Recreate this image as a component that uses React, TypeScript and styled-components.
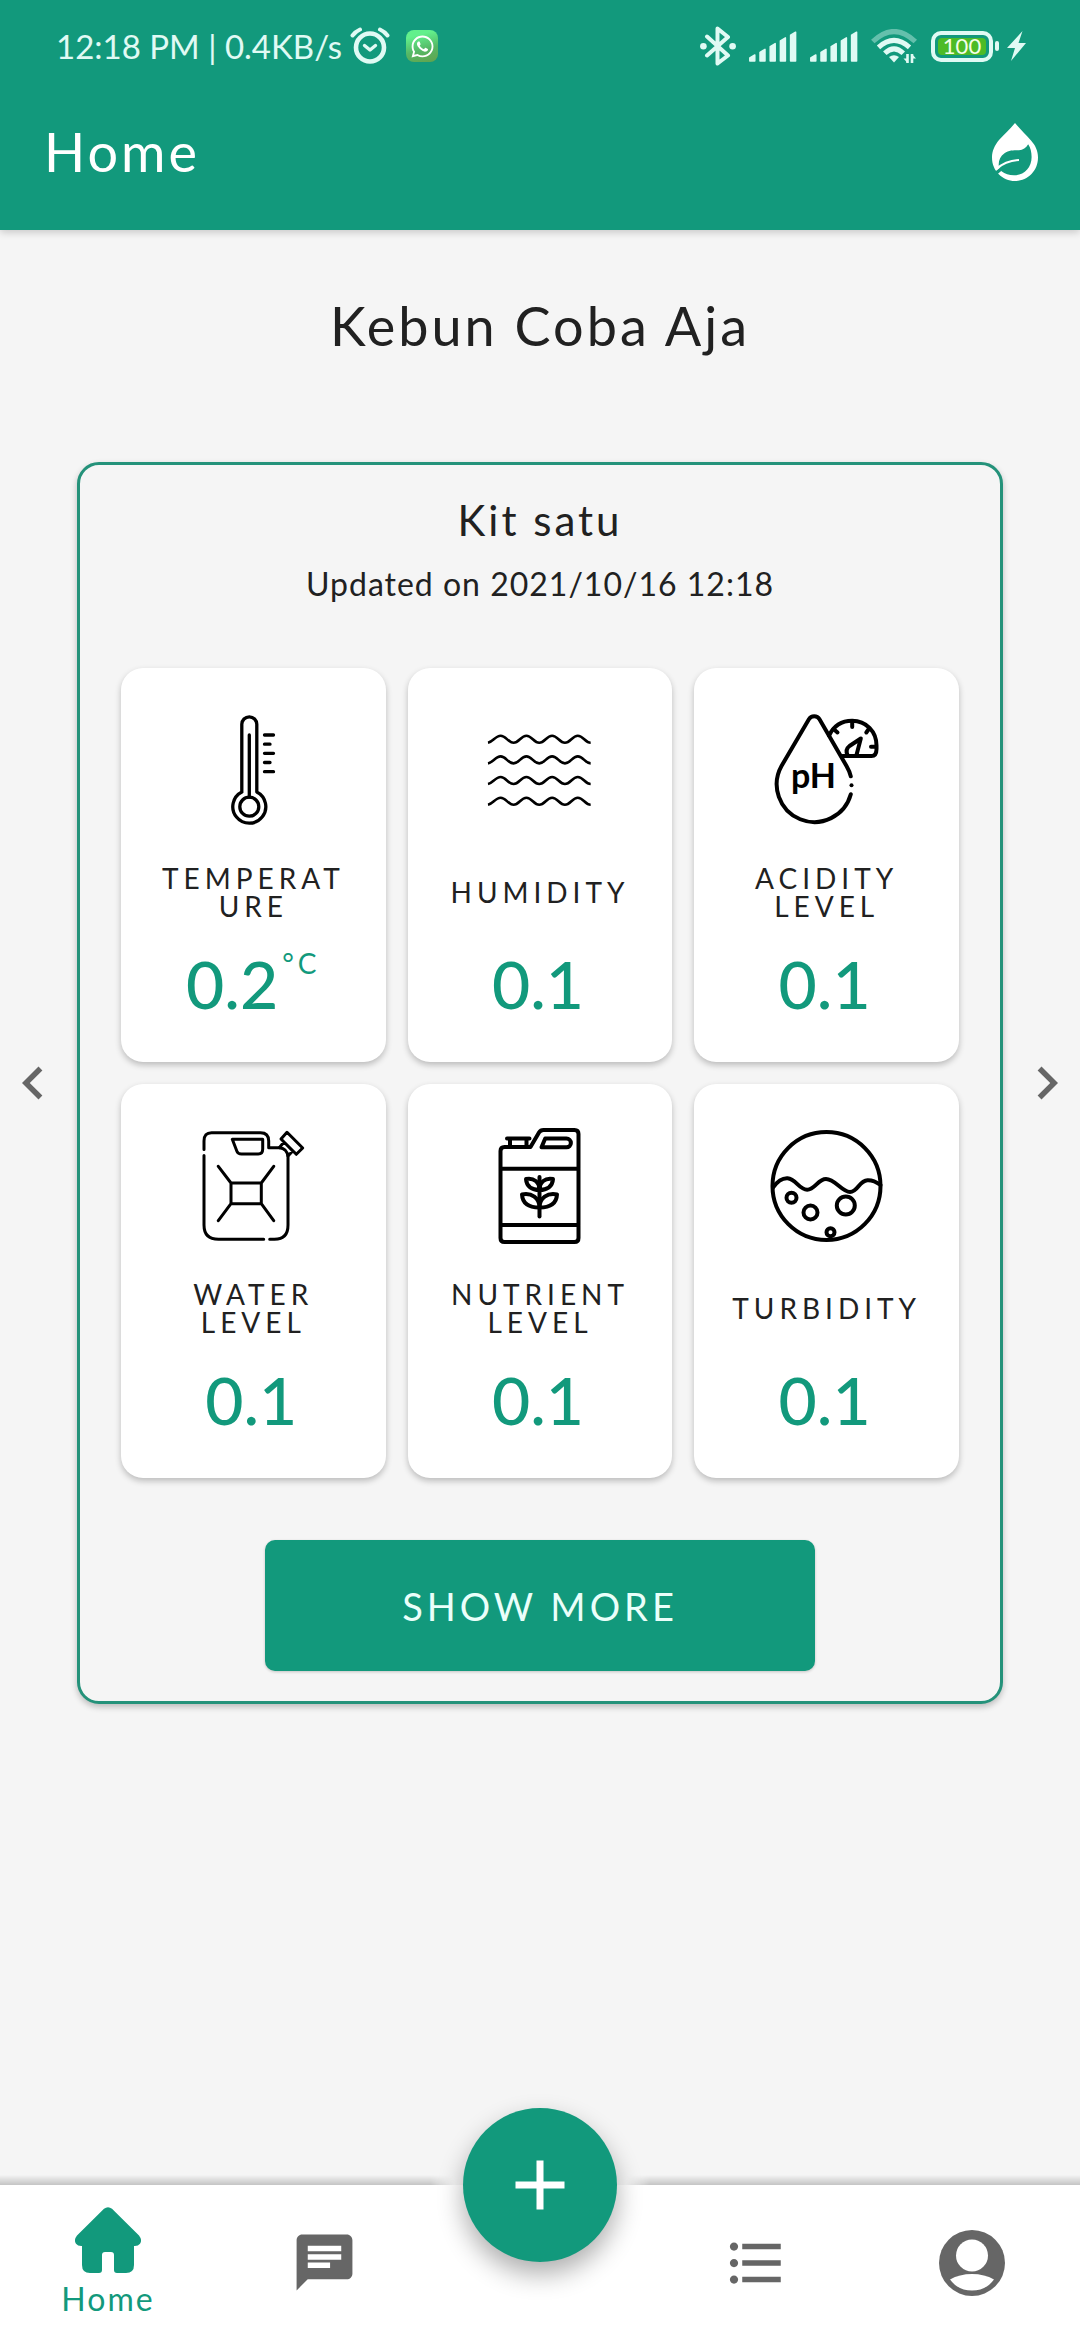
import React from "react";
import styled, { createGlobalStyle } from "styled-components";
import {
  MdAdd,
  MdChat,
  MdChevronLeft,
  MdChevronRight,
  MdFormatListBulleted,
} from "react-icons/md";
import { FaWhatsapp } from "react-icons/fa";

const green = "#12997c";
const ink = "#212121";
const grey = "#666666";
const surface = "#f5f5f5";
const statusInk = "#e0faf4";

const GlobalStyle = createGlobalStyle`
  *, *::before, *::after { box-sizing: border-box; }
  body {
    margin: 0;
    background: ${surface};
    color: ${ink};
    font-family: Lato, "Open Sans", sans-serif;
  }
  h1, h2, h3, p { margin: 0; font-weight: 400; }
  button { font: inherit; border: 0; padding: 0; background: none; cursor: pointer; }
  svg { display: block; flex: none; }
`;

const Screen = styled.div`
  min-height: 100vh;
  display: flex;
  flex-direction: column;
`;

/* ---------- header ---------- */

const Header = styled.header`
  background: ${green};
  padding-bottom: 18px;
  box-shadow: 0 2px 8px rgba(0, 0, 0, 0.2);
`;

const StatusBar = styled.div`
  height: 92px;
  padding: 0 54px 0 56px;
  display: flex;
  align-items: center;
  justify-content: space-between;
  color: ${statusInk};
  font-size: 33px;
  line-height: 40px;
`;

const StatusGroup = styled.div<{ $gap: number }>`
  display: flex;
  align-items: center;
  gap: ${(p) => p.$gap}px;
`;

const StatusText = styled.span`
  white-space: nowrap;
`;

const WhatsAppBadge = styled.span`
  width: 32px;
  height: 32px;
  margin-left: 8px;
  border-radius: 8px;
  display: grid;
  place-items: center;
  font-size: 25px;
  color: #ffffff;
  background: linear-gradient(165deg, #62f08c 20%, #55b866 60%, #62a24c);
`;

const BatteryStatus = styled.span`
  display: flex;
  align-items: center;
  gap: 8px;
`;

const Battery = styled.span`
  display: flex;
  align-items: center;
  gap: 2px;
`;

const BatteryBody = styled.span`
  width: 62px;
  height: 31px;
  padding: 3px;
  border: 4px solid ${statusInk};
  border-radius: 10px;
  display: flex;
`;

const BatteryFill = styled.span`
  flex: 1;
  border-radius: 4px;
  background: #4dbb26;
  color: #f4ffe9;
  font-size: 22px;
  line-height: 16px;
  text-align: center;
`;

const BatteryTip = styled.span`
  width: 4px;
  height: 10px;
  border-radius: 2px;
  background: ${statusInk};
`;

const AppBar = styled.div`
  height: 120px;
  padding: 0 42px 0 44px;
  display: flex;
  align-items: center;
  justify-content: space-between;
  color: #ffffff;
`;

const PageTitle = styled.h1`
  font-size: 54px;
  line-height: 64px;
  letter-spacing: 3px;
`;

/* ---------- kit panel ---------- */

const Main = styled.main`
  flex: 1;
  padding: 64px 0;
`;

const GardenName = styled.h2`
  font-size: 54px;
  line-height: 64px;
  letter-spacing: 3px;
  text-align: center;
`;

const Carousel = styled.div`
  margin-top: 104px;
  display: flex;
  align-items: center;
  gap: 11px;
`;

const CarouselButton = styled.button`
  flex: none;
  font-size: 66px;
  color: ${grey};
`;

const KitPanel = styled.section`
  flex: 1;
  min-width: 0;
  padding: 29px 41px 30px;
  border: 3px solid #24927a;
  border-radius: 22px;
  background: ${surface};
  box-shadow: 0 3px 6px rgba(0, 0, 0, 0.24);
  display: flex;
  flex-direction: column;
  align-items: center;
`;

const KitName = styled.h3`
  font-size: 42px;
  line-height: 52px;
  letter-spacing: 3px;
`;

const Updated = styled.p`
  margin-top: 18px;
  font-size: 32px;
  line-height: 40px;
  letter-spacing: 1px;
`;

const SensorGrid = styled.div`
  align-self: stretch;
  margin-top: 64px;
  display: grid;
  grid-template-columns: repeat(3, minmax(0, 1fr));
  gap: 22px;
`;

const SensorCard = styled.article`
  padding: 42px 33px 38px;
  border-radius: 22px;
  background: #ffffff;
  box-shadow: 0 3px 6px rgba(0, 0, 0, 0.24);
  display: flex;
  flex-direction: column;
  align-items: center;
`;

const SensorLabel = styled.h3`
  height: 56px;
  width: 100%;
  margin-top: 34px;
  display: flex;
  align-items: center;
  justify-content: center;
  font-size: 28px;
  line-height: 28px;
  letter-spacing: 5px;
  text-align: center;
  text-transform: uppercase;
  overflow-wrap: anywhere;
`;

const Reading = styled.p`
  margin-top: 24px;
  display: flex;
  gap: 4px;
  color: ${green};
  font-size: 66px;
  font-weight: 500;
  line-height: 80px;
`;

const Unit = styled.span`
  padding-top: 5px;
  font-size: 28px;
  font-weight: 400;
  line-height: 28px;
  letter-spacing: 4px;
`;

const ShowMore = styled.button`
  && {
    width: 550px;
    max-width: 100%;
    height: 131px;
    margin-top: 62px;
    border-radius: 10px;
    background: ${green};
    box-shadow: 0 1px 3px rgba(0, 0, 0, 0.2);
    color: #eafffa;
    font-size: 38px;
    line-height: 48px;
    letter-spacing: 4px;
  }
`;

/* ---------- bottom navigation ---------- */

const BottomNav = styled.nav`
  position: relative;
  height: 155px;
  background: #ffffff;
  display: grid;
  grid-template-columns: repeat(5, minmax(0, 1fr));

  &::before {
    content: "";
    position: absolute;
    left: 0;
    right: 0;
    bottom: 100%;
    height: 10px;
    background: linear-gradient(to top, rgba(0, 0, 0, 0.2), rgba(0, 0, 0, 0));
    mask-image: linear-gradient(
      to right,
      #000 calc(50% - 110px),
      transparent calc(50% - 86px),
      transparent calc(50% + 86px),
      #000 calc(50% + 110px)
    );
  }
`;

const NavItem = styled.a<{ $active?: boolean }>`
  display: flex;
  flex-direction: column;
  align-items: center;
  justify-content: center;
  gap: 6px;
  color: ${(p) => (p.$active ? green : grey)};
  text-decoration: none;
  font-size: 32px;
  line-height: 40px;
  letter-spacing: 2px;
`;

const AddButton = styled.button`
  && {
    position: absolute;
    top: -77px;
    left: calc(50% - 77px);
    width: 154px;
    height: 154px;
    border-radius: 50%;
    display: grid;
    place-items: center;
    background: ${green};
    color: #ffffff;
    font-size: 84px;
    box-shadow: 0 12px 26px rgba(0, 0, 0, 0.32);
  }
`;

/* ---------- status icons ---------- */

const AlarmIcon = () => (
  <svg width="40" height="38" viewBox="0 0 40 38" fill="none" stroke="currentColor" strokeLinecap="round" strokeLinejoin="round">
    <circle cx="20" cy="20.5" r="14" strokeWidth="4.6" />
    <path d="M14.5 18.5L20 23l5.500-4.500" strokeWidth="3.400" />
    <path d="M2.500 8.500Q5.500 4.500 10 2.500M30 2.500q4.500 2 7.500 6" strokeWidth="4" />
  </svg>
);

const BluetoothIcon = () => (
  <svg width="36" height="40" viewBox="0 0 36 40" fill="none">
    <path d="M7 10.500L28 29.500L17.500 37.500V2.500L28 11L7 29.500" stroke="currentColor" strokeWidth="4" strokeLinecap="round" strokeLinejoin="round" />
    <circle cx="3.400" cy="20.200" r="3.300" fill="currentColor" />
    <circle cx="32.600" cy="20.200" r="3.300" fill="currentColor" />
  </svg>
);

const SignalIcon = () => (
  <svg width="48" height="31" viewBox="0 0 48 31" fill="currentColor" stroke="currentColor" strokeWidth="1.500" strokeLinejoin="round">
    {[0, 1, 2, 3, 4].map((i) => {
      const x = 0.8 + i * 10.2;
      const top = 24 - i * 5.7;
      return <path key={i} d={`M${x} ${top + 3}L${x + 5} ${top}V30H${x}Z`} />;
    })}
  </svg>
);

const WifiIcon = () => (
  <svg width="47" height="35" viewBox="0 0 47 35" fill="none" stroke="currentColor" strokeWidth="5">
    <path d="M1.800 12.500Q23 -7.500 44.300 12.500" opacity="0.400" />
    <path d="M7.500 18.300Q23 4.500 38.500 18.300" />
    <path d="M13.800 24.300Q23 15.500 32.300 24.300" />
    <path d="M18 28q5-3.500 10 0l-5 5.500z" fill="currentColor" stroke="none" />
    <path d="M36.500 25v9M41 34v-9" strokeWidth="2.600" />
    <path d="M36.500 34l-4-4.500h4zM41 25l4 4.500h-4z" fill="currentColor" stroke="none" />
  </svg>
);

const BoltIcon = () => (
  <svg width="19" height="30" viewBox="0 0 19 30" fill="currentColor">
    <path d="M15.500 0L0 17h8L4 30L19 12h-7.500z" />
  </svg>
);

const LeafDropIcon = () => (
  <svg width="46" height="58" viewBox="0 0 46 58" fill="none" role="img" aria-label="Hydroponic">
    <path d="M23 0C29 7 34.500 12 39 17.500C43.500 22.500 46 28 46 34.500C46 48 35.500 58 23 58S0 48 0 34.500C0 28 2.500 22.500 7 17C12 11.500 17.500 6.500 23 0Z" fill="#fff" />
    <path d="M36.200 21.300C38.500 25 39.600 29 39.600 34C39.600 45 32 52.300 22 52.300C17 52.300 13 51 9.500 48.300L6.800 43C6.300 38 8 33.500 12.500 30.300C17 26.800 22 27.400 27 27.200C31 27 34 25 36.200 21.300Z" fill={green} />
    <path d="M2.500 51.500L9.500 45.500" stroke={green} strokeWidth="3.500" />
    <path d="M4.500 46C11 40 19 37.500 27 37" stroke="#fff" strokeWidth="2" />
  </svg>
);

/* ---------- sensor icons ---------- */

const SensorSvg = ({ stroke, children }: { stroke: number; children: React.ReactNode }) => (
  <svg width="120" height="120" viewBox="0 0 120 120" fill="none" stroke="#000" strokeWidth={stroke} strokeLinecap="round" strokeLinejoin="round" aria-hidden="true">
    {children}
  </svg>
);

const ThermometerIcon = () => (
  <SensorSvg stroke={3.3}>
    <path d="M48.800 82V14.300a7.500 7.500 0 0 1 15 0V82A16.500 16.500 0 1 1 48.800 82" />
    <circle cx="56.300" cy="96.700" r="9.500" />
    <path d="M56.300 25v62M71.500 25H80.500M71.500 34.200H77M71.500 43.300H80.500M71.500 52.500H77M71.500 61.700H80.500" />
  </SensorSvg>
);

const wave = (y: number) => {
  let d = `M8 ${y + 7}C13 ${y + 6} 15.500 ${y} 20.700 ${y}`;
  for (let i = 1; i <= 7; i++) {
    const x = 20.7 + i * 12.85;
    const py = i % 2 ? y + 7 : y;
    d += `S${x - 5.5} ${py} ${x} ${py}`;
  }
  return d;
};

const HumidityIcon = () => (
  <SensorSvg stroke={2.6}>
    {[25.7, 46.4, 67, 87.7].map((y) => (
      <path key={y} d={wave(y)} strokeLinecap="butt" />
    ))}
  </SensorSvg>
);

const AcidityIcon = () => (
  <SensorSvg stroke={4}>
    <path d="M83.800 66.300C83 62.500 81.500 59.500 79.500 56L52.500 9.200C50.200 5.300 44.200 5.300 41.900 9.200L14.500 56A37.700 37.700 0 1 0 83.800 84.300" />
    <circle cx="84.500" cy="75.200" r="2" fill="#000" stroke="none" />
    <path d="M62 25.700C66.500 16 75 10.700 85.200 10.700C99 10.700 109.500 21.500 109.500 35.500V39Q109.500 46 104.500 46H75.500" />
    <path d="M85.200 11v6M101.800 19l-2.500 3.500M66.500 19l4 3.500M109 36.700h-5" />
    <path d="M93.800 28.500L82.500 36Q78 39.500 80.500 45M93.800 28.500L89.500 45" />
    <text x="24" y="78" fontFamily="Lato, sans-serif" fontSize="34" fontWeight="700" fill="#000" stroke="none">
      pH
    </text>
  </SensorSvg>
);

const WaterIcon = () => (
  <SensorSvg stroke={3}>
    <path d="M11 23.500V15Q11 6.700 18.500 6.700H67.500Q75.700 6.700 75.700 15V21.700H86.300Q94.500 22.500 95 31V99Q95 113.300 81.500 113.300H76.700M70.700 113.300H25.500Q11 113.300 11 99V29.500" />
    <path d="M39.300 13.300H69.700V23Q69.700 28 65.300 28H48.500Q45 28 44 25.500Z" />
    <path d="M94 6.300L109.700 22L103.300 28.300L88 13ZM91 16L86.300 21.700M99.700 25L95 30M91 16L99.700 25" />
    <path d="M38 57H68.300V77.700H38ZM38 57L25.300 40.300M68.300 57L80.700 40.300M38 77.700L25.300 94.700M68.300 77.700L80.700 94.700" />
  </SensorSvg>
);

const NutrientIcon = () => (
  <SensorSvg stroke={4}>
    <path d="M20.500 25Q20.500 21 24.500 21H50.500L59 6.500Q60.500 4 63.500 4H94.500Q98.500 4 98.500 8V112Q98.500 116 94.500 116H24.500Q20.500 116 20.500 112ZM20.500 42.700H98.500M20.500 99H98.500" />
    <path d="M27 12.500H49.500M30 13V20.500M46.500 13V20.500" />
    <path d="M61.500 21.300L65.200 12.500H86.500a4.400 4.400 0 0 1 0 8.800Z" />
    <path d="M59.500 51V90.500" />
    <path d="M59.500 64C52 64 46.500 60.500 46 53C54 51.500 59.500 56 59.500 64C59.500 56 65 51.500 73 53C72.500 60.500 67 64 59.500 64" />
    <path d="M59.500 81.500C50 81.500 42.500 78 42 68.500C51.500 66.500 59.500 72 59.500 81.500C59.500 72 67.500 66.500 77 68.500C76.500 78 69 81.500 59.500 81.500" />
  </SensorSvg>
);

const TurbidityIcon = () => (
  <SensorSvg stroke={4}>
    <circle cx="59.500" cy="60" r="54" />
    <path d="M6 61.500C10 56 15 52 20.500 52.300C29 53 32 63.700 40.200 63.700C48 63.700 51 53 59 53C68 53 75 66 83 66C91 66 92 54.500 100.500 54.200C105 54 109.500 56 113.500 59" />
    <circle cx="24.500" cy="71.700" r="5" />
    <circle cx="43.500" cy="86.500" r="7" />
    <circle cx="78.800" cy="79.500" r="9" />
    <circle cx="63.500" cy="106.300" r="4" />
  </SensorSvg>
);

/* ---------- navigation icons ---------- */

const HomeIcon = () => (
  <svg width="66" height="66" viewBox="0 0 66 66" fill="currentColor" aria-hidden="true">
    <path d="M29 1.800Q33 -1.500 37 1.800L64 28.500Q67.500 33 65 36.800Q63 39.300 59 39V58Q59 66 51 66H42Q39 66 39 63V48Q39 45 36 45H30Q27 45 27 48V63Q27 66 24 66H15Q7 66 7 58V39Q3 39.300 1 36.800Q-1.500 33 2 28.500Z" />
  </svg>
);

const ProfileIcon = () => (
  <svg width="66" height="66" viewBox="0 0 66 66" aria-hidden="true">
    <circle cx="33" cy="33" r="33" fill="currentColor" />
    <circle cx="33" cy="25.500" r="16" fill="#fff" />
    <path d="M11 49.500Q20.500 44 33 44T55 49.500Q47 60.500 33 60.500T11 49.500Z" fill="#fff" />
  </svg>
);

/* ---------- page ---------- */

const sensors = [
  { label: "Temperature", value: "0.2", unit: "°C", Icon: ThermometerIcon },
  { label: "Humidity", value: "0.1", unit: "", Icon: HumidityIcon },
  { label: "Acidity Level", value: "0.1", unit: "", Icon: AcidityIcon },
  { label: "Water Level", value: "0.1", unit: "", Icon: WaterIcon },
  { label: "Nutrient Level", value: "0.1", unit: "", Icon: NutrientIcon },
  { label: "Turbidity", value: "0.1", unit: "", Icon: TurbidityIcon },
];

export default function App() {
  return (
    <Screen>
      <GlobalStyle />
      <Header>
        <StatusBar>
          <StatusGroup $gap={8}>
            <StatusText>12:18 PM | 0.4KB/s</StatusText>
            <AlarmIcon />
            <WhatsAppBadge>
              <FaWhatsapp />
            </WhatsAppBadge>
          </StatusGroup>
          <StatusGroup $gap={13}>
            <BluetoothIcon />
            <SignalIcon />
            <SignalIcon />
            <WifiIcon />
            <BatteryStatus>
              <Battery>
                <BatteryBody>
                  <BatteryFill>100</BatteryFill>
                </BatteryBody>
                <BatteryTip />
              </Battery>
              <BoltIcon />
            </BatteryStatus>
          </StatusGroup>
        </StatusBar>
        <AppBar>
          <PageTitle>Home</PageTitle>
          <LeafDropIcon />
        </AppBar>
      </Header>

      <Main>
        <GardenName>Kebun Coba Aja</GardenName>
        <Carousel>
          <CarouselButton type="button" aria-label="Previous kit">
            <MdChevronLeft />
          </CarouselButton>
          <KitPanel>
            <KitName>Kit satu</KitName>
            <Updated>Updated on 2021/10/16 12:18</Updated>
            <SensorGrid>
              {sensors.map(({ label, value, unit, Icon }) => (
                <SensorCard key={label}>
                  <Icon />
                  <SensorLabel>{label}</SensorLabel>
                  <Reading>
                    {value}
                    <Unit>{unit}</Unit>
                  </Reading>
                </SensorCard>
              ))}
            </SensorGrid>
            <ShowMore type="button">SHOW MORE</ShowMore>
          </KitPanel>
          <CarouselButton type="button" aria-label="Next kit">
            <MdChevronRight />
          </CarouselButton>
        </Carousel>
      </Main>

      <BottomNav aria-label="Main">
        <NavItem href="#home" $active aria-current="page">
          <HomeIcon />
          Home
        </NavItem>
        <NavItem href="#messages" aria-label="Messages">
          <MdChat size={67} />
        </NavItem>
        <span />
        <NavItem href="#list" aria-label="List">
          <MdFormatListBulleted size={66} />
        </NavItem>
        <NavItem href="#profile" aria-label="Profile">
          <ProfileIcon />
        </NavItem>
        <AddButton type="button" aria-label="Add">
          <MdAdd />
        </AddButton>
      </BottomNav>
    </Screen>
  );
}
